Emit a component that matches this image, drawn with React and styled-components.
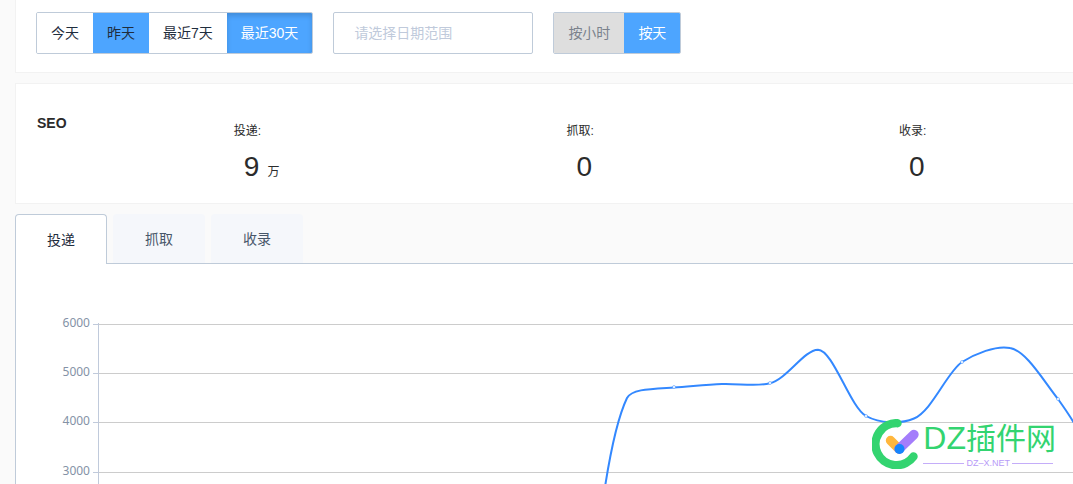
import React from "react";
import styled, { createGlobalStyle, css } from "styled-components";

const GlobalStyle = createGlobalStyle`
  *, *::before, *::after { box-sizing: border-box; }
  body {
    margin: 0;
    background: #fafafa;
    color: #1f2d3d;
    font-family: "Liberation Sans", "Noto Sans CJK SC", sans-serif;
    font-size: 14px;
  }
`;

const Page = styled.main`
  display: flex;
  flex-direction: column;
  gap: 10px;
  min-height: 100vh;
  padding-left: 15px;
  overflow: hidden;
`;

const Panel = styled.section`
  background: #fff;
  border: 1px solid #f2f2f2;
  border-right: 0;
  padding: 0 20px;
`;

const Toolbar = styled(Panel)`
  display: flex;
  gap: 20px;
  border-top: 0;
  padding-top: 12px;
  padding-bottom: 18px;
`;

const ButtonGroup = styled.div`
  display: flex;
  height: 42px;
  border: 1px solid #bfcbd9;
  border-radius: 2px;
  overflow: hidden;
`;

const variants = {
  plain: css`background: #fff; color: #1f2d3d;`,
  hover: css`background: #4da5ff; color: #1f2d3d;`,
  active: css`background: #4da5ff; color: #fff;`,
  pressed: css`
    background: #4da5ff;
    color: #fff;
    box-shadow: inset 0 3px 5px rgba(0, 0, 0, 0.15);
  `,
  muted: css`background: #dedede; color: #7b828c;`,
};

const GroupButton = styled.button`
  border: 0;
  padding: 0 14px 2px;
  font: inherit;
  white-space: nowrap;
  cursor: pointer;
  ${({ $variant }) => variants[$variant]}
`;

const DateInput = styled.input`
  width: 200px;
  height: 42px;
  padding: 0 20px;
  border: 1px solid #bfcbd9;
  border-radius: 2px;
  background: #fff;
  font: inherit;
  &::placeholder { color: #c0cadb; opacity: 1; }
`;

const Summary = styled(Panel)`
  display: grid;
  grid-template-columns: 19% 32.1% 32.1% auto;
  height: 121px;
  padding: 31px 0 0 21px;
  color: #2b2b2b;
`;

const SummaryTitle = styled.h2`
  margin: 0;
  font-size: 14px;
  line-height: 16px;
`;

const Stat = styled.div`
  padding-top: 7px;
`;

const StatLabel = styled.div`
  font-size: 12px;
  line-height: 18px;
`;

const StatValue = styled.div`
  margin-top: 10px;
  padding-left: 10px;
  font-size: 28px;
  line-height: 34px;
`;

const Unit = styled.small`
  margin-left: 8px;
  font-size: 12px;
`;

const TabPanel = styled.section`
  display: flex;
  flex: 1;
  flex-direction: column;
`;

const TabList = styled.div`
  display: flex;
  gap: 6px;
  height: 50px;
  box-shadow: inset 0 -1px #bfcbd9;
`;

const Tab = styled.button`
  width: 92px;
  height: 49px;
  padding: 0 0 2px;
  border: 0;
  border-radius: 4px 4px 0 0;
  background: #f5f7fb;
  color: #475669;
  font: inherit;
  ${({ $active }) =>
    $active &&
    css`
      height: 50px;
      border: 1px solid #bfcbd9;
      border-bottom: 0;
      background: #fff;
      color: #1f2d3d;
    `}
`;

const ChartArea = styled.div`
  position: relative;
  flex: 1;
  border-left: 1px solid #bfcbd9;
  background: #fff;
`;

const Chart = styled.svg`
  display: block;
  width: 100%;
  height: 220px;
`;

const AxisLabel = styled.text`
  fill: #8492a6;
  font-family: "Noto Sans", sans-serif;
  font-size: 12px;
  text-anchor: end;
`;

const Watermark = styled.div`
  position: absolute;
  right: 17px;
  top: 155px;
  display: flex;
  align-items: flex-start;
  gap: 3px;
`;

const BrandText = styled.div`
  display: flex;
  flex-direction: column;
`;

const BrandName = styled.div`
  color: #33d470;
  font-size: 30px;
  line-height: 38px;
  white-space: nowrap;
`;

const BrandInitials = styled.span`
  font-size: 32px;
`;

const BrandSite = styled.div`
  display: flex;
  align-items: center;
  gap: 2px;
  margin-right: 3px;
  color: #b79bf7;
  font-size: 9px;
  line-height: 10px;
  &::before, &::after {
    content: "";
    flex: 1;
    height: 1px;
    background: #c4adf9;
  }
`;

const ranges = [
  ["今天", "plain"],
  ["昨天", "hover"],
  ["最近7天", "plain"],
  ["最近30天", "pressed"],
];
const units = [
  ["按小时", "muted"],
  ["按天", "active"],
];
const stats = [
  { label: "投递", value: "9", unit: "万" },
  { label: "抓取", value: "0" },
  { label: "收录", value: "0" },
];
const tabs = ["投递", "抓取", "收录"];
const ticks = [
  [6000, 60],
  [5000, 109],
  [4000, 158],
  [3000, 208],
];
const markers = [
  [658, 123],
  [754, 119],
  [850, 152],
  [946, 98],
  [1042, 135],
];
const curve =
  "M589 223 C594 191 601 155 611 134 C616 125 634 125 658 123.5 C674 122.5 690 120.5 706 120 C722 119.3 740 123 754 119.3 C771 115 788 86 802 85.7 C817 86 834 143 850 152 C864 159.5 884 160.5 898 154.5 C916 147 931 108 946 98 C959 90 980 81 994 84 C1010 86.5 1027 116 1042 135 C1047 142 1052 149 1058 159";

function Options({ label, items }) {
  return (
    <ButtonGroup role="group" aria-label={label}>
      {items.map(([text, variant]) => (
        <GroupButton key={text} type="button" $variant={variant}>
          {text}
        </GroupButton>
      ))}
    </ButtonGroup>
  );
}

function BrandMark() {
  return (
    <svg width="48" height="50" viewBox="0 0 48 50" fill="none" strokeLinecap="round" aria-hidden="true">
      <path d="M25.5 4.2A21 21 0 1 0 41.5 37.5" stroke="#33d470" strokeWidth="8.4" />
      <path d="M18.5 21.5L27 30" stroke="#ffb73d" strokeWidth="9.4" />
      <path d="M27 30L42 15.5" stroke="#a47dfb" strokeWidth="9.4" />
      <circle cx="27.5" cy="30" r="5" fill="#1685fc" />
    </svg>
  );
}

export default function App() {
  return (
    <>
      <GlobalStyle />
      <Page>
        <Toolbar>
          <Options label="时间" items={ranges} />
          <DateInput type="text" aria-label="日期范围" placeholder="请选择日期范围" />
          <Options label="单位" items={units} />
        </Toolbar>
        <Summary>
          <SummaryTitle>SEO</SummaryTitle>
          {stats.map(({ label, value, unit }) => (
            <Stat key={label}>
              <StatLabel>{label}:</StatLabel>
              <StatValue>
                {value}
                {unit && <Unit>{unit}</Unit>}
              </StatValue>
            </Stat>
          ))}
        </Summary>
        <TabPanel>
          <TabList role="tablist">
            {tabs.map((name, i) => (
              <Tab key={name} type="button" role="tab" aria-selected={i === 0} $active={i === 0}>
                {name}
              </Tab>
            ))}
          </TabList>
          <ChartArea role="tabpanel">
            <Chart role="img" aria-label="投递">
              {ticks.map(([value, y]) => (
                <g key={value}>
                  <rect x="83" y={y} width="100%" height="1" fill="#ccc" />
                  <rect x="77" y={y} width="5" height="1" fill="#c0cadb" />
                  <AxisLabel x="74" y={y + 3}>{value}</AxisLabel>
                </g>
              ))}
              <rect x="82" y="59" width="1" height="100%" fill="#c0cadb" />
              <path d={curve} fill="none" stroke="#3388ff" strokeWidth="2" />
              {markers.map(([x, y]) => (
                <circle key={x} cx={x} cy={y} r="1.5" fill="#fff" stroke="#3388ff" strokeWidth="0.5" />
              ))}
            </Chart>
            <Watermark>
              <BrandMark />
              <BrandText>
                <BrandName>
                  <BrandInitials>DZ</BrandInitials>插件网
                </BrandName>
                <BrandSite>DZ–X.NET</BrandSite>
              </BrandText>
            </Watermark>
          </ChartArea>
        </TabPanel>
      </Page>
    </>
  );
}
